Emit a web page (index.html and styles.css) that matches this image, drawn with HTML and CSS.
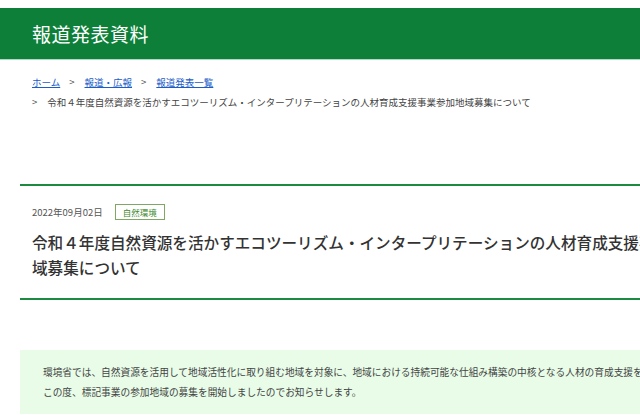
FILE: index.html
```html
<!DOCTYPE html>
<html lang="ja">
<head>
    <meta charset="UTF-8">
    <meta name="viewport" content="width=device-width, initial-scale=1.0">
    <title>報道発表資料</title>
    <link rel="stylesheet" href="styles.css">
</head>
<body>
    <header class="page-header">
        <h1>報道発表資料</h1>
    </header>

    <div class="container">
        <nav class="breadcrumb">
            <ol>
                <li><a href="#">ホーム</a></li>
                <li><a href="#">報道・広報</a></li>
                <li><a href="#">報道発表一覧</a></li>
                <li class="current">令和４年度自然資源を活かすエコツーリズム・インタープリテーションの人材育成支援事業参加地域募集について</li>
            </ol>
        </nav>

        <article class="press">
            <div class="press-meta">
                <span class="press-date">2022年09月02日</span>
                <span class="press-tag">自然環境</span>
            </div>
            <h2 class="press-title">令和４年度自然資源を活かすエコツーリズム・インタープリテーションの人材育成支援事業参加地域募集について</h2>
        </article>

        <div class="lead">
            <p>環境省では、自然資源を活用して地域活性化に取り組む地域を対象に、地域における持続可能な仕組み構築の中核となる人材の育成支援を行っています。</p>
            <p>この度、標記事業の参加地域の募集を開始しましたのでお知らせします。</p>
        </div>
    </div>
</body>
</html>
```

FILE: styles.css
```css
html {
    scrollbar-width: none;
}

body {
    font-family: "Noto Sans CJK JP", "Noto Sans", sans-serif;
    margin: 0;
    padding-top: 8px;
    color: #333;
    background-color: #fff;
}

.page-header {
    background-color: #0d7f38;
    border-bottom: 1px solid #a9dcc0;
    height: 51px;
    display: flex;
    align-items: center;
    padding-left: 32px;
}

.page-header h1 {
    margin: 0;
    color: #fff;
    font-size: 19px;
    font-weight: normal;
    letter-spacing: 0.5px;
}

.container {
    width: 720px;
    margin-left: 20px;
}

.breadcrumb ol {
    list-style: none;
    margin: 12px 0 0;
    padding: 0 0 0 12px;
    display: flex;
    flex-wrap: wrap;
    font-size: 9.5px;
    line-height: 20px;
}

.breadcrumb li {
    margin-right: 9px;
}

.breadcrumb li + li::before {
    content: ">";
    color: #555;
    margin-right: 10px;
}

.breadcrumb li.current {
    width: 100%;
    color: #444;
}

.breadcrumb a {
    color: #1a5cc8;
}

.press {
    margin-top: 72px;
    border-top: 2px solid #1c8b41;
    border-bottom: 2px solid #1c8b41;
    padding: 18px 12px;
}

.press-meta {
    display: flex;
    align-items: center;
    height: 16px;
}

.press-date {
    font-size: 9.5px;
    color: #555;
}

.press-tag {
    margin-left: 12px;
    border: 1px solid #7ea866;
    color: #3e8a2c;
    font-size: 8.5px;
    height: 14px;
    line-height: 14px;
    padding: 0 7px;
}

.press-title {
    margin: 10px 0 0;
    font-size: 15.6px;
    font-weight: 500;
    line-height: 25px;
    color: #333;
}

.lead {
    margin-top: 50px;
    background-color: #e8fce8;
    padding: 12px 23px;
}

.lead p {
    margin: 0;
    font-size: 9.7px;
    line-height: 20px;
    color: #444;
}
```
